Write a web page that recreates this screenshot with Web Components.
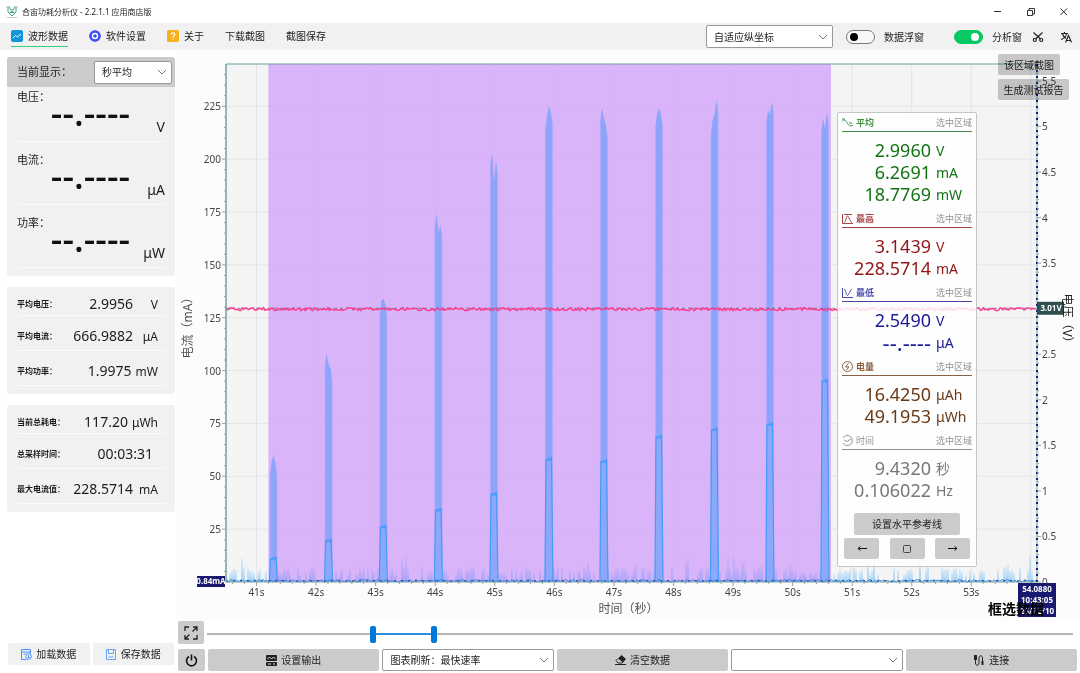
<!DOCTYPE html>
<html lang="zh-CN">
<head>
<meta charset="utf-8">
<title>合宙功耗分析仪</title>
<style>
html, body { margin: 0; height: 100%; }
body { background: #fff; color: #1c1c1c; font: 10px/14px "Noto Sans", "Noto Sans CJK SC", sans-serif; }
</style>
</head>
<body>
<power-app></power-app>
<script>
const define = (name, html, setup) => {
  const tpl = document.createElement('template');
  tpl.innerHTML = '<style>*{box-sizing:border-box}button,select,input{font:inherit;color:inherit;margin:0}button{border:0;padding:0;cursor:pointer}svg{display:block;flex:none}</style>' + html;
  customElements.define(name, class extends HTMLElement {
    connectedCallback() {
      if (this.shadowRoot) return;
      this.attachShadow({ mode: 'open' }).append(tpl.content.cloneNode(true));
      if (setup) setup(this, this.shadowRoot);
    }
  });
};

/* ---------- controls ---------- */
define('action-button', `
<style>
:host{display:flex;min-width:0}
button{flex:1;height:100%;display:flex;align-items:center;justify-content:center;gap:4px;background:var(--btn,#cbcbcb);border-radius:2px;white-space:nowrap}
</style>
<button type="button"><slot></slot></button>`, (el, root) => {
  if (el.title) root.querySelector('button').setAttribute('aria-label', el.title);
});

define('combo-box', `
<style>
:host{display:grid;min-width:0}
select,svg{grid-area:1/1}
select{appearance:none;width:100%;height:100%;background:#fff;border:1px solid #999;border-radius:2px;padding:0 24px 0 7px}
svg{justify-self:end;align-self:center;margin-right:5px;pointer-events:none}
</style>
<select></select>
<svg width="10" height="6" viewBox="0 0 10 6" fill="none" stroke="#777"><path d="M1 1l4 4 4-4"/></svg>`, (el, root) => {
  const s = root.querySelector('select');
  s.setAttribute('aria-label', el.getAttribute('label'));
  s.append(new Option(el.getAttribute('value') || ''));
});

define('toggle-switch', `
<style>
:host{display:block}
label{display:flex;align-items:center;gap:9px;white-space:nowrap}
input{appearance:none;width:29px;height:14px;border:1px solid #777;border-radius:7px;background:#f8f8f8;display:flex;align-items:center;padding:0 3px}
input::before{content:"";width:8px;height:8px;border-radius:50%;background:#000}
input:checked{background:#07c863;border-color:#07c863;justify-content:flex-end}
input:checked::before{background:#fff}
</style>
<label><input type="checkbox"><slot></slot></label>`, (el, root) => {
  root.querySelector('input').checked = el.hasAttribute('checked');
});

define('range-slider', `
<style>
:host{display:grid;align-items:center;height:23px;padding-top:3px}
.track,input{grid-area:1/1}
.track{height:2px;background:linear-gradient(90deg,#b4b4b4 19%,#2d90de 19% 26%,#b4b4b4 26%)}
input{appearance:none;width:100%;height:18px;background:none;pointer-events:none}
input::-webkit-slider-thumb{appearance:none;width:6px;height:17px;border-radius:2px;background:#0078d7;pointer-events:auto}
</style>
<div class="track"></div>
<input type="range" min="0" max="1000" value="189" aria-label="区间起点">
<input type="range" min="0" max="1000" value="260" aria-label="区间终点">`);

/* ---------- header ---------- */
define('title-bar', `
<style>
:host{display:flex;align-items:center;height:23px;padding:0 11px 0 6px;background:#fff}
h1{flex:1;margin:0 0 0 4px;font-size:8px;font-weight:400;line-height:12px}
.win{display:flex;gap:22px}
button{background:none;width:11px;height:11px}
</style>
<svg width="12" height="12" viewBox="0 0 12 12" fill="none" stroke="#4ca07c"><path d="M.5 1h3l1 3h3l1-3h3M2 2v4l4 4 4-4V2M5 5l1 2 1-2M3.500 6.500h5"/><path d="M1 11.500h10" stroke="#b5d6c5"/></svg>
<h1>合宙功耗分析仪 - 2.2.1.1 应用商店版</h1>
<div class="win">
<button aria-label="最小化"><svg width="11" height="11" viewBox="0 0 11 11" stroke="#333"><path d="M2 5.500h7"/></svg></button>
<button aria-label="还原"><svg width="11" height="11" viewBox="0 0 11 11" fill="none" stroke="#333"><path d="M2.500 4.500h5v5h-5zM4 4.500V2.500h5.500v5.500H7.500"/></svg></button>
<button aria-label="关闭"><svg width="11" height="11" viewBox="0 0 11 11" stroke="#333"><path d="M2.500 2.500l6.500 6.500M9 2.500L2.500 9"/></svg></button>
</div>`);

define('nav-tab', `
<style>
:host{display:flex}
a{display:flex;align-items:center;gap:5px;height:21px;color:inherit;text-decoration:none;white-space:nowrap;border-bottom:1px solid transparent}
:host([current]) a{border-color:#35d07f}
</style>
<a href="#"><slot></slot></a>`);

define('tool-bar', `
<style>
:host{display:flex;align-items:center;height:27px;padding:0 8px 0 11px;background:#f1f1f1}
nav{display:flex;gap:21px;flex:1}
.tools{display:flex;align-items:center}
combo-box{width:127px;height:23px;margin-right:13px}
toggle-switch + toggle-switch{margin:0 10px 0 30px}
button{background:none;width:12px;height:12px}
button + button{margin-left:16px}
</style>
<nav>
<nav-tab current><svg width="12" height="12" viewBox="0 0 12 12"><rect width="12" height="12" rx="2" fill="#1296db"/><path d="M2 8l2.500-2.500 2 1.500L10 4" fill="none" stroke="#fff"/></svg>波形数据</nav-tab>
<nav-tab><svg width="12" height="12" viewBox="0 0 12 12"><path d="M3 1l3-1 3 1 2 2 1 3-1 3-2 2-3 1-3-1-2-2-1-3 1-3z" fill="#3d4ff5"/><circle cx="6" cy="6" r="2.500" fill="none" stroke="#fff" stroke-width="1.400"/></svg>软件设置</nav-tab>
<nav-tab><svg width="12" height="12" viewBox="0 0 12 12"><rect width="12" height="12" rx="1.500" fill="#f5b21c"/><path d="M4.300 4.500c0-2.300 3.500-2.300 3.500 0C7.800 6 6 5.800 6 7.500M6 8.500v1.200" fill="none" stroke="#fff" stroke-width="1.200"/></svg>关于</nav-tab>
<nav-tab>下载截图</nav-tab>
<nav-tab>截图保存</nav-tab>
</nav>
<div class="tools">
<combo-box label="纵坐标" value="自适应纵坐标"></combo-box>
<toggle-switch>数据浮窗</toggle-switch>
<toggle-switch checked>分析窗</toggle-switch>
<button aria-label="截图"><svg width="12" height="12" viewBox="0 0 12 12" fill="none" stroke="#222" stroke-width="1.200"><path d="M1.500 1.500L8.500 8M10.500 1.500L3.500 8"/><circle cx="2.800" cy="9" r="1.500"/><circle cx="9.200" cy="9" r="1.500"/></svg></button>
<button aria-label="语言"><svg width="12" height="12" viewBox="0 0 12 12" fill="none" stroke="#222" stroke-width="1.100"><path d="M1 2.500h7M4.500 1v1.500M2.300 2.500C3 5 4.500 6.500 6 7.500M6.700 2.500C6 5.500 4 7.500 1 8.500M5.500 11.500l3-7 3 7M6.500 9.500h4"/></svg></button>
</div>`);

/* ---------- sidebar ---------- */
define('live-reading', `
<style>
:host{display:grid;grid-template:20px 30px / 1fr auto;height:63px;padding-top:8px;border-bottom:1px solid #fbfbfb}
:host([first]){height:55px;padding-top:0}
.label{grid-column:1/3;font-size:11px;line-height:20px}
.value{font:500 36px/27px "Noto Sans",sans-serif;text-align:right;height:27px;margin-top:-8px;color:#111}
.unit{font-size:14px;line-height:20px;width:35px;text-align:right;align-self:end}
</style>
<div class="label"><slot name="label"></slot></div><div class="value">--.----</div><div class="unit"><slot></slot></div>`);

define('stat-row', `
<style>
:host{display:flex;align-items:center;height:35px;padding:5px 7px 0 0;border-bottom:1px solid #fbfbfb;white-space:nowrap}
:host([first]){height:29px}
.label{flex:1;font-size:8px;font-weight:700}
.value{font-size:14px}
.unit{font-size:12px;min-width:21px;margin-left:4px;text-align:right;padding-top:2px}
:host([plain]) .value{padding-right:5px}
:host([plain]) .unit{display:none}
</style>
<span class="label"><slot name="label"></slot></span><span class="value"><slot></slot></span><span class="unit"><slot name="unit"></slot></span>`);

define('side-bar', `
<style>
:host{display:flex;flex-direction:column;width:176px;flex:none;padding:7px 1px 8px 7px}
.head{display:flex;align-items:center;justify-content:space-between;height:30px;background:#cbcbcb;border-radius:3px 3px 0 0;padding:0 3px 0 10px;font-size:11px}
.head combo-box{width:78px;height:23px;font-size:10px}
section{background:#f1f1f1;border-radius:3px;padding:0 10px 8px;margin-bottom:11px}
.actions{display:grid;grid-template-columns:1fr 1fr;gap:3px;margin-top:auto;padding:0 1px;--btn:#f1f1f1}
.actions action-button{height:22px}
</style>
<div class="head"><span>当前显示：</span><combo-box label="当前显示" value="秒平均"></combo-box></div>
<section>
<live-reading first><span slot="label">电压：</span>V</live-reading>
<live-reading><span slot="label">电流：</span>μA</live-reading>
<live-reading><span slot="label">功率：</span>μW</live-reading>
</section>
<section>
<stat-row first><span slot="label">平均电压：</span>2.9956<span slot="unit">V</span></stat-row>
<stat-row><span slot="label">平均电流：</span>666.9882<span slot="unit">μA</span></stat-row>
<stat-row><span slot="label">平均功率：</span>1.9975<span slot="unit">mW</span></stat-row>
</section>
<section>
<stat-row first><span slot="label">当前总耗电：</span>117.20<span slot="unit">μWh</span></stat-row>
<stat-row plain><span slot="label">总采样时间：</span>00:03:31</stat-row>
<stat-row><span slot="label">最大电流值：</span>228.5714<span slot="unit">mA</span></stat-row>
</section>
<div class="actions">
<action-button><svg width="11" height="11" viewBox="0 0 11 11" fill="none" stroke="#4b8ff7"><path d="M5 10.500H.5V.5h9v4M.5 3h9M2.500 5h2"/><circle cx="7.500" cy="7.500" r="2.800"/><path d="M7.500 6v3M6.500 8l1 1 1-1"/></svg>加载数据</action-button>
<action-button><svg width="11" height="11" viewBox="0 0 11 11" fill="none" stroke="#6ba5f8"><path d="M.5.5h9v10h-9zM2.500.5v4h5v-4M2.500 8h5"/></svg>保存数据</action-button>
</div>`);

/* ---------- analysis panel ---------- */
define('analysis-group', `
<style>
:host{display:block}
header{display:flex;align-items:center;gap:3px;height:18px;font-size:9px;border-bottom:1px solid currentColor;opacity:.8}
b{flex:1;font-weight:700}
:host([light]) b{font-weight:400}
span{color:#777}
.rows{padding:6px 0}
.row{display:grid;grid-template-columns:89px 1fr;gap:5px;height:22px;align-items:center}
.num{font-size:18px;line-height:22px;text-align:right}
.num.empty{font-size:22px}
.unit{font-size:14px;line-height:22px;padding-top:2px}
</style>
<header><slot name="icon"></slot><b></b><span>选中区域</span></header><div class="rows"></div>`, (el, root) => {
  root.querySelector('b').textContent = el.getAttribute('name');
  root.querySelector('.rows').innerHTML = el.getAttribute('values').split('|').map(v => {
    const [n, u] = v.split(' ');
    return `<div class="row"><div class="num${n.startsWith('-') ? ' empty' : ''}">${n}</div><div class="unit">${u}</div></div>`;
  }).join('');
});

define('analysis-panel', `
<style>
:host{display:block;width:140px;padding:1px 4px 7px;background:rgba(255,255,255,.84);border:1px solid #c6c6c6;border-radius:2px}
.ref{height:22px;width:106px;margin:7px auto 3px}
.steps{display:flex;justify-content:space-between;padding:0 2px}
.steps action-button{width:35px;height:21px}
</style>
<analysis-group style="color:#147314" name="平均" values="2.9960 V|6.2691 mA|18.7769 mW"><svg slot="icon" width="11" height="10" viewBox="0 0 11 10" fill="none" stroke="currentColor"><path d="M0 3.500c2-3 4-1 5 1s3 5 6 2.500M0 1h3M7 5h3"/></svg></analysis-group>
<analysis-group style="color:#8f1616" name="最高" values="3.1439 V|228.5714 mA"><svg slot="icon" width="11" height="10" viewBox="0 0 11 10" fill="none" stroke="currentColor"><path d="M.5 0v9.500H11M2 .5h8M2 8.500C4 8 4 2 5.500 2S8 8 10 8.500"/></svg></analysis-group>
<analysis-group style="color:#1a1a96" name="最低" values="2.5490 V|--.---- μA"><svg slot="icon" width="11" height="10" viewBox="0 0 11 10" fill="none" stroke="currentColor"><path d="M.5 0v9.500H11M2 1C4 1.500 4 7.500 5.500 7.500S8 1.500 10 1"/></svg></analysis-group>
<analysis-group style="color:#6b3a17" name="电量" values="16.4250 μAh|49.1953 μWh"><svg slot="icon" width="11" height="11" viewBox="0 0 11 11" fill="none" stroke="currentColor"><circle cx="5.500" cy="5.500" r="5"/><path d="M6.500 2L3.500 6H7L4.500 9"/></svg></analysis-group>
<analysis-group style="color:#777" light name="时间" values="9.4320 秒|0.106022 Hz"><svg slot="icon" width="11" height="11" viewBox="0 0 11 11" fill="none" stroke="currentColor"><path d="M1 3a5 5 0 1 1 0 5M2 5l3 1.500L9 4"/></svg></analysis-group>
<action-button class="ref">设置水平参考线</action-button>
<div class="steps">
<action-button title="向左"><svg width="10" height="7" viewBox="0 0 10 7" fill="none" stroke="#111"><path d="M10 3.500H1M3.500 1.500l-2.500 2 2.500 2"/></svg></action-button>
<action-button title="停止"><svg width="8" height="8" viewBox="0 0 8 8" fill="none" stroke="#444"><rect x=".5" y=".5" width="7" height="7" rx="1"/></svg></action-button>
<action-button title="向右"><svg width="10" height="7" viewBox="0 0 10 7" fill="none" stroke="#111"><path d="M0 3.500h9M6.500 1.500l2.500 2-2.500 2"/></svg></action-button>
</div>`);

/* ---------- waveform ---------- */
/* time (s), mean current, then peak current at the left, middle and right of the burst (mA) */
const BURSTS = [
  [41.285, 11, 56, 60, 56], [42.21, 19.5, 108, 103, 101], [43.13, 26, 133, 134, 131],
  [44.055, 34, 174, 165, 169], [44.987, 41.5, 203, 189, 199], [45.91, 58, 220, 225, 222],
  [46.833, 57, 224, 219, 216], [47.757, 68.5, 221, 224, 221], [48.689, 72, 218, 221, 228],
  [49.62, 74.5, 223, 221, 227], [50.544, 95, 219, 214, 222]
];

define('wave-chart', `
<style>
:host{display:block;position:relative;background:#fcfcfc;min-height:200px;overflow:hidden}
svg{width:100%;height:100%}
text{font-size:10px;fill:#444}
.axis{font-size:12px;fill:#555}
.tag{font-size:8px;font-weight:700;fill:#fff}
.mode{font-size:14px;font-weight:700;fill:#000}
.shots{position:absolute;top:4px;right:11px;width:71px;display:grid;gap:4px;justify-items:start;mix-blend-mode:multiply}
.shots action-button{height:21px}
.shots action-button:first-child{width:62px}
.shots action-button:last-child{width:71px}
analysis-panel{position:absolute;top:62px;right:103px}
</style>
<svg role="img" aria-label="电流与电压波形"></svg>
<div class="shots"><action-button>该区域截图</action-button><action-button>生成测试报告</action-button></div>
<analysis-panel></analysis-panel>`, (el, root) => {
  const svg = root.querySelector('svg');
  const draw = () => {
    const W = el.clientWidth, H = el.clientHeight;
    if (!W || !H) return;
    const L = 50, R = W - 43, T = 14, B = H - 39;
    const X = t => L + (t - 40.488) * (R - L) / 13.615;
    const I = a => B - a * (B - T) / 245;
    const V = v => B - v * (B - T) / 5.686;
    let seed = 7;
    const rnd = () => (seed = (seed * 16807) % 2147483647) / 2147483647;
    const out = [];
    const line = (x1, y1, x2, y2, c, extra = '') => out.push(`<path d="M${x1} ${y1}L${x2} ${y2}" stroke="${c}" ${extra}/>`);
    const text = (x, y, s, a = 'middle', cls = '') => out.push(`<text x="${x}" y="${y}" text-anchor="${a}" class="${cls}">${s}</text>`);

    out.push(`<rect x="${L}" y="${T}" width="${R - L}" height="${B - T}" fill="#f4f4f4"/>`);
    for (let a = 25; a <= 225; a += 25) line(L, I(a), R, I(a), '#e5e5e5');
    for (let t = 41; t <= 54; t++) line(X(t), T, X(t), B, '#e5e5e5');
    const s0 = X(41.2), s1 = X(50.644);
    out.push(`<rect x="${s0}" y="${T}" width="${s1 - s0}" height="${B - T}" fill="rgb(212,168,249)" opacity=".85"/>`);

    let inside = '', outside = '';
    for (let x = L + 2; x < R - 1; x += 2) {
      if (rnd() < 0.4) continue;
      let h = 7 + rnd() * 8;
      if (rnd() < 0.1) h += rnd() * 16;
      const d = `M${x - 1} ${B}L${x - 0.3} ${B - h}h.6L${x + 1} ${B}`;
      if (x > s0 && x < s1) inside += d; else outside += d;
    }
    out.push(`<path d="${inside}" fill="#a9a5f8"/><path d="${outside}" fill="#a3d3f9"/>`);

    for (const [t, avg, a, b, c] of BURSTS) {
      const x = X(t), y = I(avg);
      out.push(`<path d="M${x - 4} ${B}V${I(a - 6)}L${x - 2} ${I(a)}L${x} ${I(b)}L${x + 2} ${I(c)}L${x + 4} ${I(c - 6)}V${B}Z" fill="#b0aaf9"/>`);
      out.push(`<path d="M${x - 3} ${B}V${I(a - 5)}L${x - 2} ${I(a)}L${x} ${I(b)}L${x + 2} ${I(c)}L${x + 3} ${I(c - 5)}V${B}Z" fill="#8ca4fa"/>`);
      out.push(`<path d="M${x - 4} ${B}L${x - 3} ${y}l1.500 1 1-2 1.500 2 1.500-3.500 L${x + 4} ${B}" fill="#8ca8fa" stroke="#469afb" stroke-width="1.200"/>`);
    }

    let low = '', v = '';
    for (let x = L; x < R; x += 1.5) {
      low += `${low ? 'L' : 'M'}${x.toFixed(1)} ${(B - rnd() * 2.4).toFixed(1)}`;
      v += `${v ? 'L' : 'M'}${x.toFixed(1)} ${(V(2.995) - 1.5 + rnd() * 3).toFixed(1)}`;
    }
    out.push(`<path d="${low}" fill="none" stroke="#2b86e0"/>`);
    line(L, B - 1, R, B - 1, '#191970', 'stroke-dasharray="2 5"');
    line(L, V(3.005), R, V(3.005), '#2f4f4f', 'stroke-dasharray="3 3" opacity=".6"');
    out.push(`<path d="${v}" fill="none" stroke="#fa3d90" stroke-width="1.500"/>`);

    const teal = '#6f9fa3', tick = '#9aa3a5';
    line(L, T, R, T, teal); line(L, T, L, B, teal, 'stroke-width="1.500"'); line(L, B, R, B, teal); line(R, T, R, B, teal);
    line(R, T, R, B, '#191985', 'stroke-width="2" stroke-dasharray="2 4"');
    for (let a = 5; a < 244; a += 5) line(L - (a % 25 ? 2 : 4), I(a), L, I(a), tick);
    for (let a = 25; a <= 225; a += 25) text(L - 5, I(a) + 4, a, 'end');
    for (let k = 0; k <= 56; k++) line(R, V(k / 10), R + (k % 5 ? 2 : 4), V(k / 10), tick);
    for (let k = 0; k <= 11; k++) text(R + 5, V(k / 2) + 4, k / 2, 'start');
    for (let t = 203; t <= 270; t++) line(X(t / 5), B, X(t / 5), B + (t % 5 ? 2 : 4), tick);
    for (let t = 41; t <= 53; t++) text(X(t), B + 14, t + 's');

    const my = (T + B) / 2;
    out.push(`<text class="axis" text-anchor="middle" transform="translate(16 ${my + 2}) rotate(-90)">电流（mA）</text>`);
    text((L + R) / 2 - 3, H - 8, '时间（秒）', 'middle', 'axis');
    out.push(`<rect x="21" y="${B - 6}" width="28" height="11" fill="#191970"/>`);
    text(35, B + 2, '0.84mA', 'middle', 'tag');
    out.push(`<rect x="${R}" y="${V(3.01) - 6}" width="27" height="13" fill="#2f4f4f"/>`);
    text(R + 14, V(3.01) + 3, '3.01V', 'middle', 'tag');
    out.push(`<text class="axis" style="fill:#222" text-anchor="middle" transform="translate(${W - 17} ${my - 2}) rotate(90)">电压（V）</text>`);
    out.push(`<rect x="${R - 19}" y="${B + 1}" width="38" height="34" fill="#191970"/>`);
    ['54.0880', '10:43:05', '25/12/10'].forEach((s, i) => text(R, B + 10 + i * 11, s, 'middle', 'tag'));
    text(R + 7, H - 7, '框选数据', 'end', 'mode');
    svg.innerHTML = out.join('');
  };
  draw();
  new ResizeObserver(draw).observe(el);
});

/* ---------- page ---------- */
define('control-dock', `
<style>
:host{display:grid;grid-template-columns:27px minmax(0,1fr);gap:5px 3px;padding:0 3px 2px 2px}
action-button.sq{height:23px;width:26px}
range-slider{margin:0 4px 0 -1px}
.bar{display:grid;grid-template-columns:repeat(5,minmax(0,1fr));gap:3px}
.bar > *, action-button.pw{height:22px}
</style>
<action-button class="sq" title="全屏"><svg width="14" height="14" viewBox="0 0 14 14" fill="none" stroke="#222" stroke-width="1.300"><path d="M1 5V1h4M13 9v4H9M8.500 5.500L13 1M9 1h4v4M5.500 8.500L1 13M1 9v4h4"/></svg></action-button>
<range-slider></range-slider>
<action-button class="pw" title="电源"><svg width="13" height="13" viewBox="0 0 13 13" fill="none" stroke="#111" stroke-width="1.600"><path d="M4 2.500a5 5 0 1 0 5 0M6.500.5v6"/></svg></action-button>
<div class="bar">
<action-button><svg width="11" height="11" viewBox="0 0 11 11"><rect width="11" height="6" rx="1" fill="#222"/><rect y="7" width="11" height="4" rx="1" fill="#222"/><path d="M1.500 4l2-2 2 2 2-2 2 2M2 9h3M7 9h2" fill="none" stroke="#ddd"/></svg>设置输出</action-button>
<combo-box label="图表刷新" value="图表刷新：最快速率"></combo-box>
<action-button><svg width="11" height="10" viewBox="0 0 11 10"><path d="M3 3.500L6.500 0 11 4 8 7.500z" fill="#222"/><path d="M3 3.500L1 5.500l2 2.500h4l1-1M0 9.500h11" fill="none" stroke="#222"/></svg>清空数据</action-button>
<combo-box label="串口" value=""></combo-box>
<action-button><svg width="12" height="11" viewBox="0 0 12 11" fill="none" stroke="#222"><path d="M2.500 0v5" stroke-width="3"/><path d="M2.500 5v3c0 3 3.500 3 3.500 0V3c0-3 3.500-3 3.500 0v3"/><path d="M9.500 6v4" stroke-width="2"/></svg>连接</action-button>
</div>`);

define('power-app', `
<style>
:host{display:flex;flex-direction:column;min-height:100vh}
.body{flex:1;display:flex;min-height:0}
main{flex:1;min-width:0;display:flex;flex-direction:column}
wave-chart{flex:1}
</style>
<title-bar></title-bar>
<tool-bar></tool-bar>
<div class="body">
<side-bar></side-bar>
<main><wave-chart></wave-chart><control-dock></control-dock></main>
</div>`);
</script>
</body>
</html>
